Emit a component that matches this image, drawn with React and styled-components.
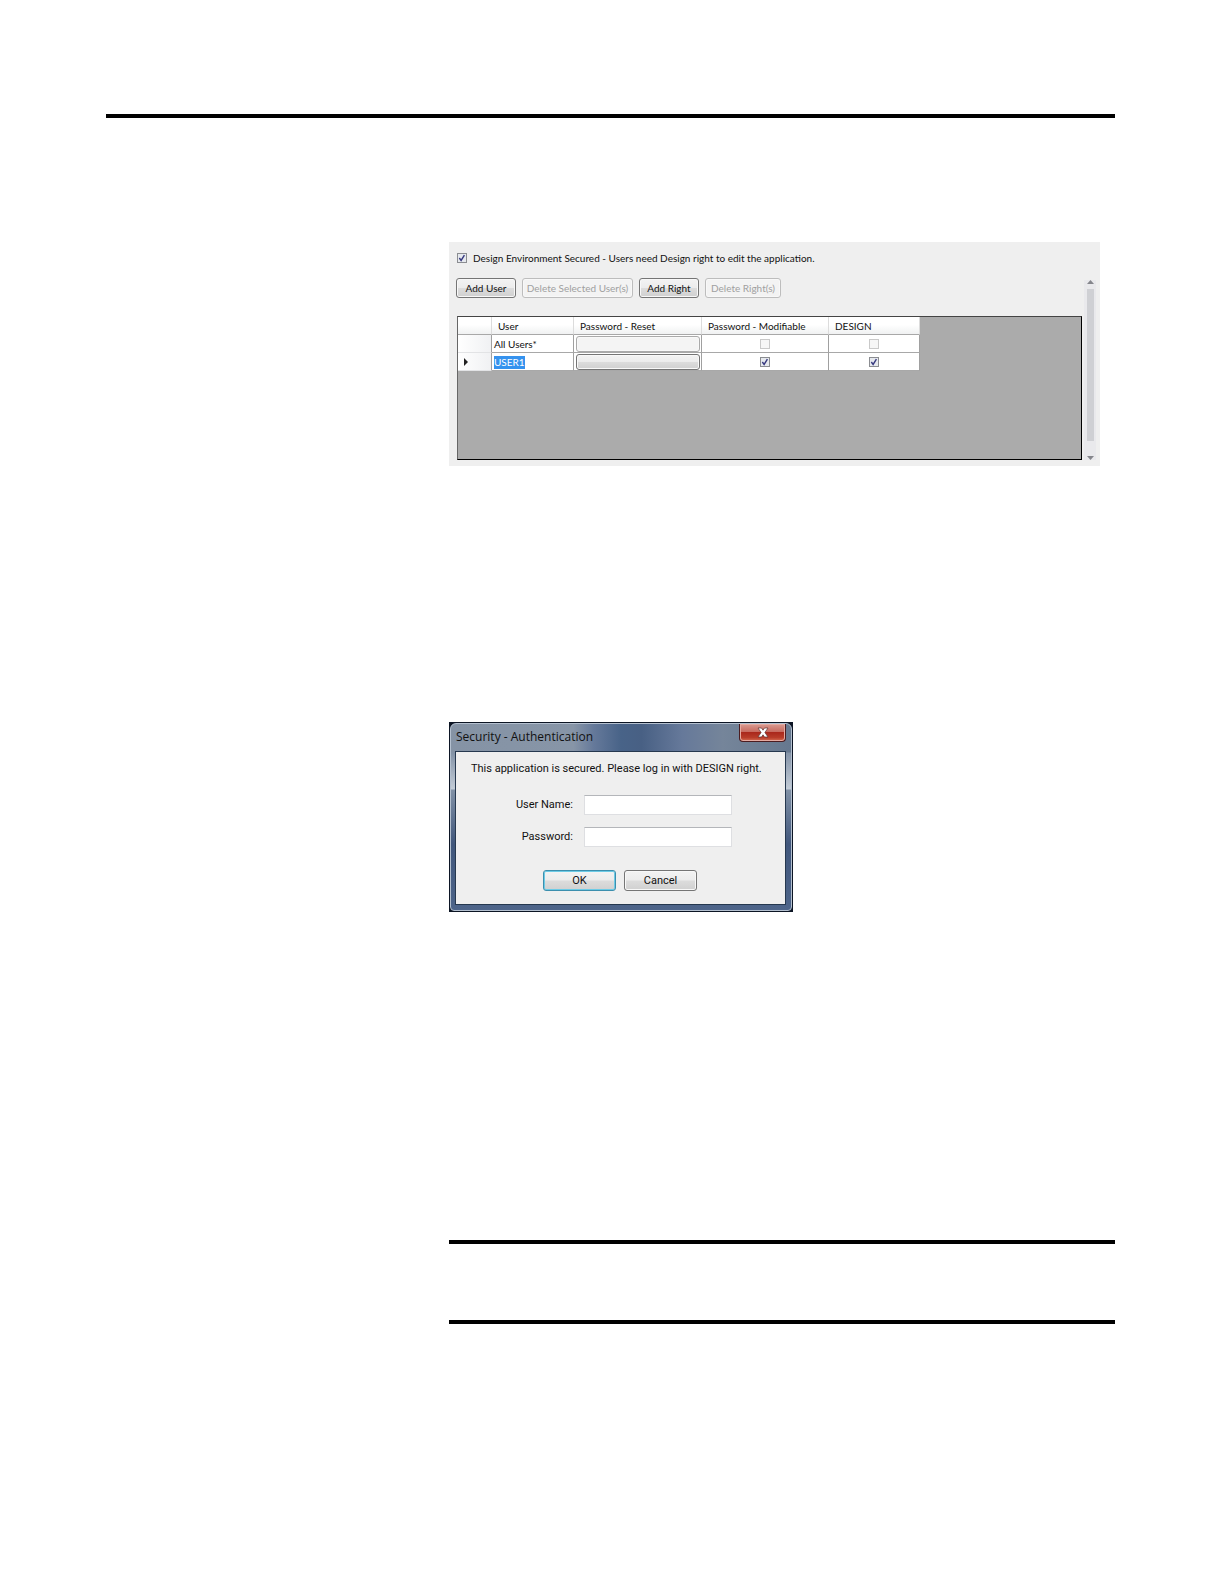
import React from "react";
import styled, { createGlobalStyle, css } from "styled-components";

const columns = ["User", "Password - Reset", "Password - Modifiable", "DESIGN"];

const App = () => {
  return (
    <>
      <GlobalStyle />
      <Page>
        <Rule />
        <Content>
          <SecurityPanel />
          <LoginDialog />
          <Note />
        </Content>
      </Page>
    </>
  );
};

export default App;

const SecurityPanel = () => (
  <Panel>
    <PanelMain>
      <SecuredLabel>
        <Check type="checkbox" defaultChecked />
        Design Environment Secured - Users need Design right to edit the
        application.
      </SecuredLabel>
      <Toolbar>
        <ToolButton $width={60}>Add User</ToolButton>
        <ToolButton $width={111} disabled>
          Delete Selected User(s)
        </ToolButton>
        <ToolButton $width={60}>Add Right</ToolButton>
        <ToolButton $width={76} disabled>
          Delete Right(s)
        </ToolButton>
      </Toolbar>
      <GridBox>
        <Table>
          <colgroup>
            <Col $width={34} />
            <Col $width={82} />
            <Col $width={128} />
            <Col $width={127} />
            <Col $width={91} />
          </colgroup>
          <thead>
            <tr>
              <Th aria-label="Row" />
              {columns.map((name) => (
                <Th key={name}>{name}</Th>
              ))}
            </tr>
          </thead>
          <tbody>
            <tr>
              <RowHead />
              <Td>All Users*</Td>
              <Td>
                <ResetButton aria-label="Reset password, all users" disabled />
              </Td>
              <Td $center>
                <Check type="checkbox" aria-label="Modifiable" disabled />
              </Td>
              <Td $center>
                <Check type="checkbox" aria-label="Design" disabled />
              </Td>
            </tr>
            <tr>
              <RowHead>
                <svg width="4" height="8" viewBox="0 0 4 8">
                  <path d="M0 0L4 4L0 8Z" fill="#222" />
                </svg>
              </RowHead>
              <Td>
                <Selected>USER1</Selected>
              </Td>
              <Td>
                <ResetButton aria-label="Reset password, USER1" />
              </Td>
              <Td $center>
                <Check type="checkbox" aria-label="Modifiable" defaultChecked />
              </Td>
              <Td $center>
                <Check type="checkbox" aria-label="Design" defaultChecked />
              </Td>
            </tr>
          </tbody>
        </Table>
      </GridBox>
    </PanelMain>
    <ScrollBar>
      <svg width="7" height="4" viewBox="0 0 7 4">
        <path d="M0 4L3.500 0L7 4Z" fill="#85868c" />
      </svg>
      <Thumb />
      <svg width="7" height="4" viewBox="0 0 7 4">
        <path d="M0 0L3.500 4L7 0Z" fill="#85868c" />
      </svg>
    </ScrollBar>
  </Panel>
);

const LoginDialog = () => (
  <DialogEdge>
    <Dialog role="dialog" aria-labelledby="dialog-title">
      <TitleBar>
        <Title id="dialog-title">Security - Authentication</Title>
        <CloseButton aria-label="Close">
          <svg width="12" height="11" viewBox="0 0 12 11">
            <path
              d="M1 1H4.500L6 3.200L7.500 1H11L7.900 5.500L11 10H7.500L6 7.800L4.500 10H1L4.100 5.500Z"
              fill="#fff"
              stroke="#5c3434"
              strokeWidth="0.700"
            />
          </svg>
        </CloseButton>
      </TitleBar>
      <DialogBody>
        <Message>
          This application is secured. Please log in with DESIGN right.
        </Message>
        <Fields>
          <FieldLabel htmlFor="user-name">User Name:</FieldLabel>
          <Field id="user-name" type="text" />
          <FieldLabel htmlFor="password">Password:</FieldLabel>
          <Field id="password" type="password" />
        </Fields>
        <Actions>
          <DialogButton $primary>OK</DialogButton>
          <DialogButton>Cancel</DialogButton>
        </Actions>
      </DialogBody>
    </Dialog>
  </DialogEdge>
);

const GlobalStyle = createGlobalStyle`
  * {
    box-sizing: border-box;
  }
  body {
    margin: 0;
    background: #fff;
    color: #111;
    font-family: "Open Sans", "Noto Sans", sans-serif;
  }
  button, input {
    font: inherit;
    color: inherit;
    margin: 0;
    padding: 0;
  }
  svg {
    display: block;
    flex-shrink: 0;
  }
`;

const Page = styled.main`
  min-height: 100vh;
  padding: 114px 109px 80px 106px;
`;

const Rule = styled.hr`
  height: 4px;
  margin: 0;
  border: none;
  background: #000;
`;

const Content = styled.div`
  margin-left: 343px;
  padding-top: 124px;
`;

const Panel = styled.section`
  display: flex;
  max-width: 651px;
  height: 224px;
  padding: 10px 4px 6px 7px;
  background: #efefef;
  font-family: Lato, "Open Sans", sans-serif;
  font-size: 10px;
  line-height: 14px;
`;

const PanelMain = styled.div`
  flex: 1;
  display: flex;
  flex-direction: column;
`;

const SecuredLabel = styled.label`
  display: flex;
  align-items: center;
  gap: 6px;
  height: 12px;
  padding-left: 1px;
  white-space: nowrap;
`;

const Check = styled.input`
  appearance: none;
  display: block;
  flex-shrink: 0;
  width: 10px;
  height: 10px;
  border: 1px solid #8b8d91;
  background: #e6e9ee;
  &:checked {
    background: #e6e9ee
      url("data:image/svg+xml,%3Csvg xmlns='http://www.w3.org/2000/svg' viewBox='0 0 9 9'%3E%3Cpath d='M1.500 4.500L3.500 7.200L7.200 1.200' fill='none' stroke='%23383a80' stroke-width='1.600'/%3E%3C/svg%3E");
  }
  &:disabled {
    border-color: #c9c9c9;
    background: #f6f6f6;
  }
`;

const Toolbar = styled.div`
  display: flex;
  gap: 6px;
  margin-top: 14px;
`;

const buttonFace = css`
  border: 1px solid #757575;
  border-radius: 3px;
  background: linear-gradient(#f3f3f3 0%, #ececec 48%, #dcdcdc 52%, #d0d0d0 100%);
  box-shadow: inset 0 0 0 1px #f8f8f8;
  white-space: nowrap;
`;

const ToolButton = styled.button`
  ${buttonFace}
  width: ${(props) => props.$width}px;
  height: 20px;
  line-height: 18px;
  &:disabled {
    border-color: #bdbdbd;
    background: #f3f3f3;
    color: #a0a0a0;
  }
`;

const GridBox = styled.div`
  flex: 1;
  margin: 18px 0 0 1px;
  border: 1px solid #000;
  border-top-color: #444;
  border-left-color: #666;
  background: #ababab;
`;

const Table = styled.table`
  table-layout: fixed;
  width: 462px;
  border-collapse: separate;
  border-spacing: 0;
  background: #fff;
`;

const Col = styled.col`
  width: ${(props) => props.$width}px;
`;

const Th = styled.th`
  height: 18px;
  padding: 0 0 0 6px;
  border-right: 1px solid #dcdcdc;
  border-bottom: 1px solid #a8a8a8;
  background: linear-gradient(#fff 45%, #f0f1f2);
  font-weight: 400;
  text-align: left;
  white-space: nowrap;
`;

const Td = styled.td`
  height: 18px;
  padding: 0 1px;
  padding-left: 2px;
  border-right: 1px solid #a0a0a0;
  border-bottom: 1px solid #a8a8a8;
  ${(props) =>
    props.$center &&
    css`
      padding: 0 1px 0 0;
      ${Check} {
        margin: 0 auto;
      }
    `}
`;

const RowHead = styled.td`
  height: 18px;
  padding: 0 0 0 6px;
  border-right: 1px solid #a0a0a0;
  border-bottom: 1px solid #e2e3e5;
  background: linear-gradient(90deg, #fff, #f0f1f3);
`;

const Selected = styled.span`
  display: inline-block;
  height: 13px;
  line-height: 13px;
  background: #3592ee;
  color: #fff;
  vertical-align: middle;
`;

const ResetButton = styled.button`
  ${buttonFace}
  display: block;
  width: 100%;
  height: 16px;
  &:disabled {
    border-color: #aaa;
    background: #f4f4f4;
  }
`;

const ScrollBar = styled.div`
  display: flex;
  flex-direction: column;
  align-items: center;
  width: 12px;
  margin: 28px 0 0 2px;
  background: #e9e9ec;
`;

const Thumb = styled.div`
  flex: 1;
  width: 7px;
  margin: 5px 0 15px;
  background: #cfd0d4;
`;

const DialogEdge = styled.section`
  width: 344px;
  max-width: 100%;
  margin-top: 256px;
  padding: 1px;
  background: #0c1524;
`;

const Dialog = styled.div`
  padding: 0 5px 5px 4px;
  border: 1px solid #b4c0cf;
  border-radius: 6px 6px 4px 4px;
  background: linear-gradient(#66788f00 28px, #8493a7 29px, #c3ccd7 65px, #66799400 66px),
    linear-gradient(90deg, #8593a5 0%, #8795a7 36%, #65799a 42%, #486388 50%, #486084 56%, #66799a 68%, #75859a 80%, #66788f 100%),
    linear-gradient(#8191a6 66px, #41577c 120px, #4e658a);
  background-size: 100% 100%, 100% 29px, 100% 100%;
  background-repeat: no-repeat;
`;

const TitleBar = styled.div`
  display: flex;
  justify-content: space-between;
  align-items: flex-start;
  height: 27px;
`;

const Title = styled.h1`
  margin: 0 0 0 1px;
  font-size: 12px;
  font-weight: 400;
  line-height: 26px;
  white-space: nowrap;
`;

const CloseButton = styled.button`
  display: flex;
  justify-content: center;
  align-items: center;
  width: 47px;
  height: 18px;
  border: 1px solid #4b1c20;
  border-top: none;
  border-radius: 0 0 4px 4px;
  background: linear-gradient(#d99b92 0%, #c76b60 45%, #aa281c 50%, #b83c29 80%, #d66e55 100%);
  box-shadow: inset 0 0 0 1px #e5aaa1;
`;

const DialogBody = styled.form`
  padding: 10px 15px 13px;
  border: 1px solid #26384f;
  background: #efefef;
  font-family: Roboto, "Liberation Sans", sans-serif;
  font-size: 11px;
  line-height: 14px;
`;

const Message = styled.p`
  margin: 0;
  white-space: nowrap;
`;

const Fields = styled.div`
  display: grid;
  grid-template-columns: 102px 148px;
  column-gap: 11px;
  row-gap: 12px;
  align-items: center;
  margin-top: 19px;
`;

const FieldLabel = styled.label`
  text-align: right;
`;

const Field = styled.input`
  height: 20px;
  padding: 0 3px;
  border: 1px solid #dedfe2;
  border-top-color: #b4b6ba;
  background: #fff;
`;

const Actions = styled.div`
  display: flex;
  gap: 8px;
  margin: 23px 0 0 72px;
`;

const DialogButton = styled.button.attrs({ type: "button" })`
  ${buttonFace}
  width: 73px;
  height: 21px;
  ${(props) =>
    props.$primary &&
    css`
      border-color: #3c8fae;
      box-shadow: inset 0 0 0 1px #6dcbe6;
    `}
`;

const Note = styled.div`
  height: 84px;
  margin-top: 328px;
  border: solid #000;
  border-width: 4px 0;
`;
